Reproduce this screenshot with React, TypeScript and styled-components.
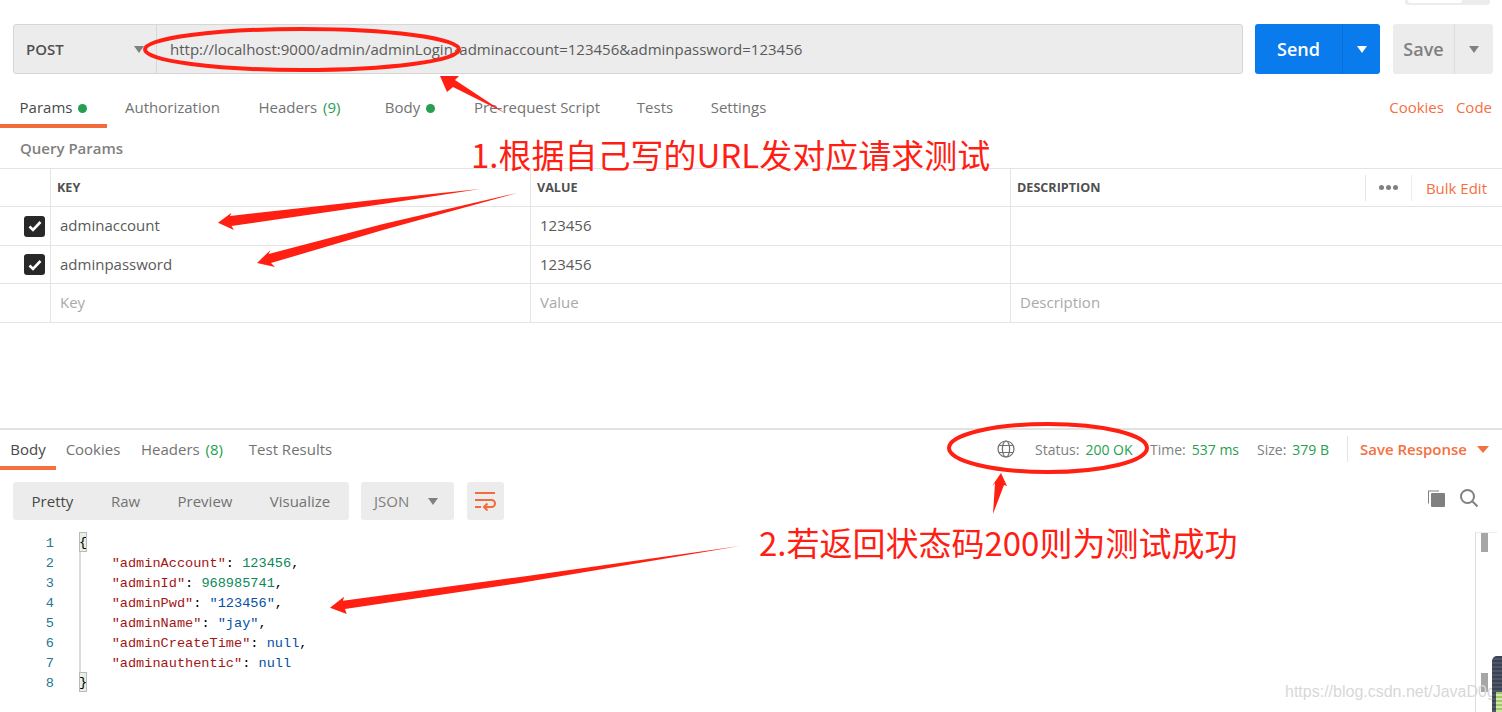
import React from "react";
import styled, { createGlobalStyle } from "styled-components";

const Global = createGlobalStyle`
  html, body { margin: 0; padding: 0; background: #fff; overflow: hidden; }
  body { font-family: "Open Sans", "Noto Sans", sans-serif; font-size: 15px; color: #5a5a5a; }
  * { box-sizing: border-box; }
`;

const Page = styled.div`
  position: relative;
  width: 1502px;
  height: 712px;
  overflow: hidden;
  display: flex;
  flex-direction: column;
  & > * { flex-shrink: 0; }
`;

const TopStrip = styled.div`
  height: 24px;
  display: flex;
  justify-content: flex-end;
  padding-right: 12px;
`;
const ToggleStub = styled.div`
  width: 85px;
  height: 5px;
  background: #ececec;
  border-radius: 0 0 3px 3px;
  padding: 0 28px 2px 3px;
  &::before { content: ""; display: block; height: 3px; background: #fff; border-radius: 0 0 2px 2px; }
`;

const RequestRow = styled.div`
  display: flex;
  height: 50px;
  padding: 0 9px 0 13px;
`;
const UrlBox = styled.div`
  width: 1230px;
  display: flex;
  background: #ececec;
  border: 1px solid #d6d6d6;
  border-radius: 3px;
`;
const Method = styled.div`
  width: 143px;
  display: flex;
  align-items: center;
  justify-content: space-between;
  padding: 0 12px;
  font-size: 15px;
  font-weight: 600;
  color: #505050;
  border-right: 1px solid #d6d6d6;
`;
const Caret = styled.span<{ $c?: string }>`
  width: 0;
  height: 0;
  border-left: 5px solid transparent;
  border-right: 5px solid transparent;
  border-top: 7px solid ${(p) => p.$c || "#808080"};
`;
const UrlText = styled.div`
  display: flex;
  align-items: center;
  padding-left: 13px;
  font-size: 15px;
  color: #5a5a5a;
  white-space: nowrap;
`;
const SplitButton = styled.div<{ $bg: string; $w: number; $ml: number }>`
  display: flex;
  width: ${(p) => p.$w}px;
  margin-left: ${(p) => p.$ml}px;
  background: ${(p) => p.$bg};
  border-radius: 3px;
`;
const SplitMain = styled.div<{ $c: string; $w: number }>`
  width: ${(p) => p.$w}px;
  display: flex;
  align-items: center;
  justify-content: center;
  color: ${(p) => p.$c};
  font-size: 18px;
  font-weight: 600;
`;
const SplitCaret = styled.div<{ $line: string }>`
  flex: 1;
  display: flex;
  align-items: center;
  justify-content: center;
  border-left: 1px solid ${(p) => p.$line};
`;

const TabRow = styled.div`
  display: flex;
  height: 54px;
  align-items: flex-start;
  padding-right: 10px;
`;
const Tab = styled.div<{ $w: number; $active?: boolean }>`
  width: ${(p) => p.$w}px;
  height: 54px;
  padding-top: 23px;
  line-height: 20px;
  font-size: 15px;
  white-space: nowrap;
  text-align: center;
  color: ${(p) => (p.$active ? "#484848" : "#737373")};
  border-bottom: 4px solid ${(p) => (p.$active ? "#f26b3a" : "transparent")};
`;
const Dot = styled.span`
  display: inline-block;
  width: 9px;
  height: 9px;
  margin-left: 6px;
  border-radius: 50%;
  background: #26a04f;
`;
const Count = styled.span`
  color: #26a04f;
  margin-left: 2px;
`;
const Spacer = styled.div`flex: 1;`;
const OrangeLink = styled.div`
  margin: 23px 0 0 12px;
  line-height: 20px;
  color: #f4703f;
  font-size: 15px;
`;

const SectionTitle = styled.div`
  height: 40px;
  padding: 10px 0 0 20px;
  line-height: 20px;
  font-size: 15px;
  font-weight: 600;
  color: #808080;
`;

const Table = styled.div`
  border-top: 1px solid #e4e4e4;
`;
const Row = styled.div<{ $h: number }>`
  display: grid;
  grid-template-columns: 51px 480px 480px 1fr;
  height: ${(p) => p.$h}px;
  border-bottom: 1px solid #e4e4e4;
`;
const Cell = styled.div<{ $head?: boolean; $ghost?: boolean; $last?: boolean }>`
  display: flex;
  align-items: center;
  padding: 0 0 ${(p) => (p.$head ? 0 : 2)}px ${(p) => (p.$head ? 6 : 9)}px;
  border-right: ${(p) => (p.$last ? "none" : "1px solid #e4e4e4")};
  font-size: ${(p) => (p.$head ? 12.6 : 15)}px;
  font-weight: ${(p) => (p.$head ? 700 : 400)};
  color: ${(p) => (p.$head ? "#505050" : p.$ghost ? "#a9a9a9" : "#5a5a5a")};
`;
const CheckCell = styled.div`
  display: flex;
  align-items: center;
  justify-content: flex-end;
  padding-right: 5px;
  border-right: 1px solid #e4e4e4;
`;
const Check = styled.div`
  width: 21px;
  height: 21px;
  border-radius: 3px;
  background: #282828;
  display: flex;
  align-items: center;
  justify-content: center;
`;
const HeadActions = styled.div`
  flex: 1;
  display: flex;
  align-items: center;
  justify-content: flex-end;
  padding-right: 15px;
  height: 100%;
`;
const More = styled.div`
  display: flex;
  gap: 2px;
  height: 26px;
  align-items: center;
  padding: 0 13px;
  border-left: 1px solid #e4e4e4;
  border-right: 1px solid #ececec;
  margin-right: 14px;
`;
const MoreDot = styled.span`
  width: 5px;
  height: 5px;
  border-radius: 50%;
  background: #808080;
`;
const BulkEdit = styled.span`
  color: #f4703f;
  font-size: 15px;
  font-weight: 400;
`;

const Gap = styled.div`
  height: 107px;
  border-bottom: 2px solid #e2e2e2;
`;

const ResTabRow = styled.div`
  display: flex;
  height: 40px;
  align-items: flex-start;
`;
const ResTab = styled.div<{ $w: number; $active?: boolean }>`
  width: ${(p) => p.$w}px;
  height: 40px;
  padding-top: 9px;
  line-height: 20px;
  font-size: 15px;
  text-align: center;
  white-space: nowrap;
  color: ${(p) => (p.$active ? "#484848" : "#737373")};
  border-bottom: 4px solid ${(p) => (p.$active ? "#f4703f" : "transparent")};
`;
const StatusBar = styled.div`
  margin-left: auto;
  display: flex;
  align-items: center;
  height: 40px;
  padding: 0 13px 2px 0;
  font-size: 14px;
  color: #808080;
`;
const Globe = styled.svg`
  margin-right: 19px;
`;
const Metric = styled.span<{ $w: number }>`
  width: ${(p) => p.$w}px;
  white-space: nowrap;
`;
const Green = styled.span`
  color: #26a04f;
  margin-left: 6px;
`;
const SaveResponse = styled.div`
  display: flex;
  align-items: center;
  gap: 10px;
  height: 26px;
  padding-left: 12px;
  border-left: 1px solid #e4e4e4;
  color: #f4703f;
  font-size: 15px;
  font-weight: 600;
`;
const WideCaret = styled(Caret)`
  border-left-width: 6px;
  border-right-width: 6px;
`;

const Toolbar = styled.div`
  display: flex;
  padding: 12px 0 0 13px;
  height: 62px;
`;
const FormatGroup = styled.div`
  width: 336px;
  height: 38px;
  display: flex;
  align-items: center;
  background: #ececec;
  border-radius: 3px;
`;
const FormatItem = styled.span<{ $w: number; $active?: boolean }>`
  width: ${(p) => p.$w}px;
  text-align: center;
  font-size: 15px;
  color: ${(p) => (p.$active ? "#484848" : "#737373")};
`;
const JsonSelect = styled.div`
  width: 93px;
  height: 38px;
  margin-left: 12px;
  padding: 0 16px 0 13px;
  display: flex;
  align-items: center;
  justify-content: space-between;
  background: #ececec;
  border-radius: 3px;
  font-size: 15px;
  color: #808080;
`;
const WrapButton = styled.div`
  width: 37px;
  height: 38px;
  margin-left: 13px;
  display: flex;
  align-items: center;
  justify-content: center;
  background: #ececec;
  border-radius: 3px;
`;
const ToolIcons = styled.div`
  margin-left: auto;
  display: flex;
  gap: 12px;
  padding: 6px 23px 0 0;
  height: 28px;
`;

const Editor = styled.div`
  display: flex;
  height: 180px;
  font-family: "Liberation Mono", "DejaVu Sans Mono", monospace;
  font-size: 13.6px;
  line-height: 20px;
`;
const Gutter = styled.div`
  width: 54px;
  padding-top: 2px;
  text-align: right;
  color: #237893;
  flex-shrink: 0;
`;
const CodeArea = styled.div`
  margin-left: 25px;
  flex: 1;
  height: 160px;
  border-left: 2px solid #dcdcdc;
  color: #000;
  white-space: pre;
`;
const Line = styled.div`
  height: 20px;
  margin-left: -2px;
  line-height: 23px;
`;
const Brace = styled.span`
  display: inline-block;
  width: 8px;
  height: 20px;
  line-height: 21px;
  background: #e6f0e6;
  outline: 1px solid #b9b9b9;
  outline-offset: -1px;
  text-align: center;
  vertical-align: top;
`;
const Key = styled.span`color: #a31515;`;
const Num = styled.span`color: #09885a;`;
const Str = styled.span`color: #0451a5;`;
const Kw = styled.span`color: #0451a5;`;

const Scroll = styled.div`
  width: 22px;
  height: 180px;
  border-left: 1px solid #dcdcdc;
  border-top: 1px solid #ececec;
  margin-right: 5px;
  padding: 0 0 0 5px;
`;
const ScrollMark = styled.div<{ $h: number; $top: number }>`
  width: 7px;
  height: ${(p) => p.$h}px;
  margin-top: ${(p) => p.$top}px;
  background: #a6a6a6;
`;

const Overlay = styled.svg`
  position: absolute;
  left: 0;
  top: 0;
  pointer-events: none;
`;
const Note = styled.div<{ $x: number; $y: number }>`
  position: absolute;
  left: ${(p) => p.$x}px;
  top: ${(p) => p.$y}px;
  font-family: "Noto Sans CJK SC", "Noto Sans", sans-serif;
  font-size: 33px;
  line-height: 36px;
  color: #ff1e14;
  white-space: nowrap;
`;
const Watermark = styled.div`
  position: absolute;
  left: 1285px;
  top: 683px;
  font-family: "Liberation Sans", sans-serif;
  font-size: 16px;
  color: #d8d8d8;
  white-space: nowrap;
`;
const Thumb = styled.div`
  position: absolute;
  left: 1492px;
  top: 656px;
  width: 14px;
  height: 60px;
  border-radius: 5px 0 0 0;
  background: repeating-linear-gradient(#3c4454 0 2px, #4e5668 2px 4px);
  overflow: hidden;
  &::after {
    content: "";
    position: absolute;
    left: 4px;
    right: 0;
    top: 36px;
    bottom: 0;
    background: repeating-linear-gradient(#9fc968 0 2px, #d5e6a8 2px 4px);
  }
`;

const CheckIcon = () => (
  <svg width="14" height="12" viewBox="0 0 14 12">
    <path d="M1.5 6.5 L5 10 L12.5 2" fill="none" stroke="#fff" strokeWidth="2.6" />
  </svg>
);

const Arrow = ({ d }: { d: string }) => <path d={d} fill="#ff2013" />;

export default function App() {
  return (
    <Page>
      <Global />
      <TopStrip><ToggleStub /></TopStrip>
      <RequestRow>
        <UrlBox>
          <Method>POST<Caret /></Method>
          <UrlText>http://localhost:9000/admin/adminLogin?adminaccount=123456&amp;adminpassword=123456</UrlText>
        </UrlBox>
        <SplitButton $bg="#097bed" $w={125} $ml={12}>
          <SplitMain $c="#fff" $w={87}>Send</SplitMain>
          <SplitCaret $line="#0a6fd2"><Caret $c="#fff" /></SplitCaret>
        </SplitButton>
        <SplitButton $bg="#ececec" $w={100} $ml={13}>
          <SplitMain $c="#808080" $w={61}>Save</SplitMain>
          <SplitCaret $line="#dcdcdc"><Caret /></SplitCaret>
        </SplitButton>
      </RequestRow>

      <TabRow>
        <Tab $w={107} $active>Params<Dot /></Tab>
        <Tab $w={131}>Authorization</Tab>
        <Tab $w={123}>Headers <Count>(9)</Count></Tab>
        <Tab $w={98}>Body<Dot /></Tab>
        <Tab $w={156}>Pre-request Script</Tab>
        <Tab $w={80}>Tests</Tab>
        <Tab $w={87}>Settings</Tab>
        <Spacer />
        <OrangeLink>Cookies</OrangeLink>
        <OrangeLink>Code</OrangeLink>
      </TabRow>

      <SectionTitle>Query Params</SectionTitle>

      <Table>
        <Row $h={38}>
          <CheckCell />
          <Cell $head>KEY</Cell>
          <Cell $head>VALUE</Cell>
          <Cell $head $last>
            DESCRIPTION
            <HeadActions>
              <More><MoreDot /><MoreDot /><MoreDot /></More>
              <BulkEdit>Bulk Edit</BulkEdit>
            </HeadActions>
          </Cell>
        </Row>
        <Row $h={39}>
          <CheckCell><Check><CheckIcon /></Check></CheckCell>
          <Cell>adminaccount</Cell>
          <Cell>123456</Cell>
          <Cell $last />
        </Row>
        <Row $h={38}>
          <CheckCell><Check><CheckIcon /></Check></CheckCell>
          <Cell>adminpassword</Cell>
          <Cell>123456</Cell>
          <Cell $last />
        </Row>
        <Row $h={39}>
          <CheckCell />
          <Cell $ghost>Key</Cell>
          <Cell $ghost>Value</Cell>
          <Cell $ghost $last>Description</Cell>
        </Row>
      </Table>

      <Gap />

      <ResTabRow>
        <ResTab $w={56} $active>Body</ResTab>
        <ResTab $w={74}>Cookies</ResTab>
        <ResTab $w={104}>Headers <Count>(8)</Count></ResTab>
        <ResTab $w={113}>Test Results</ResTab>
        <StatusBar>
          <Globe width="20" height="20" viewBox="0 0 20 20" fill="none" stroke="#6f6f6f" strokeWidth="1.2">
            <circle cx="10" cy="10" r="8" />
            <ellipse cx="10" cy="10" rx="3.6" ry="8" />
            <path d="M3 6.5h14M3 13.5h14" />
          </Globe>
          <Metric $w={115}>Status:<Green>200 OK</Green></Metric>
          <Metric $w={107}>Time:<Green>537 ms</Green></Metric>
          <Metric $w={90}>Size:<Green>379 B</Green></Metric>
          <SaveResponse>Save Response<WideCaret $c="#f4703f" /></SaveResponse>
        </StatusBar>
      </ResTabRow>

      <Toolbar>
        <FormatGroup>
          <FormatItem $w={79} $active>Pretty</FormatItem>
          <FormatItem $w={67}>Raw</FormatItem>
          <FormatItem $w={92}>Preview</FormatItem>
          <FormatItem $w={98}>Visualize</FormatItem>
        </FormatGroup>
        <JsonSelect>JSON<Caret /></JsonSelect>
        <WrapButton>
          <svg width="21" height="20" viewBox="0 0 21 20" fill="none" stroke="#f26b3a" strokeWidth="2">
            <path d="M0 2h20M0 9h16.5a3.5 3.5 0 0 1 0 7H9M0 16h6M12.5 12.5 9 16l3.5 3.5" />
          </svg>
        </WrapButton>
        <ToolIcons>
          <svg width="20" height="20" viewBox="0 0 20 20">
            <path d="M1 2.5h11v1H2v12H1z" fill="#808080" />
            <rect x="4" y="5" width="14" height="14" rx="1" fill="#808080" />
          </svg>
          <svg width="20" height="20" viewBox="0 0 20 20" fill="none" stroke="#808080" strokeWidth="2">
            <circle cx="8.5" cy="8.5" r="6.5" />
            <path d="m13.5 13.5 5 5" />
          </svg>
        </ToolIcons>
      </Toolbar>

      <Editor>
        <Gutter>1<br />2<br />3<br />4<br />5<br />6<br />7<br />8</Gutter>
        <CodeArea>
          <Line><Brace>{"{"}</Brace></Line>
          <Line>{"    "}<Key>"adminAccount"</Key>: <Num>123456</Num>,</Line>
          <Line>{"    "}<Key>"adminId"</Key>: <Num>968985741</Num>,</Line>
          <Line>{"    "}<Key>"adminPwd"</Key>: <Str>"123456"</Str>,</Line>
          <Line>{"    "}<Key>"adminName"</Key>: <Str>"jay"</Str>,</Line>
          <Line>{"    "}<Key>"adminCreateTime"</Key>: <Kw>null</Kw>,</Line>
          <Line>{"    "}<Key>"adminauthentic"</Key>: <Kw>null</Kw></Line>
          <Line><Brace>{"}"}</Brace></Line>
        </CodeArea>
        <Scroll>
          <ScrollMark $h={19} $top={0} />
          <ScrollMark $h={19} $top={121} />
        </Scroll>
      </Editor>

      <Overlay width="1502" height="712" viewBox="0 0 1502 712">
        <ellipse cx="302" cy="49.5" rx="157" ry="20.5" fill="none" stroke="#ff2013" strokeWidth="4" />
        <ellipse cx="1048" cy="448" rx="99" ry="24" fill="none" stroke="#ff2013" strokeWidth="4" />
        <Arrow d="M440 76 L459 76 L455 80 L505 113 L453 87 L447 92 Z" />
        <Arrow d="M218 222.7 L231.5 212.7 L230 216 L383 199 L480 189 L383 204 L231.5 226 L234 230 Z" />
        <Arrow d="M257 263 L270.5 250 L268.6 254 L383 224 L517 193 L383 230 L271 263 L275 267 Z" />
        <Arrow d="M1001 473 L1007 486 L1004 485 L993 514 L995 483 L992 486 Z" />
        <Arrow d="M330 607.7 L344 596.7 L343 600.7 L520 577 L740 546 L520 583 L345 609 L346.7 614 Z" />
      </Overlay>
      <Note $x={471} $y={136}>1.根据自己写的URL发对应请求测试</Note>
      <Note $x={759} $y={524}>2.若返回状态码200则为测试成功</Note>
      <Watermark>https://blog.csdn.net/JavaD0g</Watermark>
      <Thumb />
    </Page>
  );
}
